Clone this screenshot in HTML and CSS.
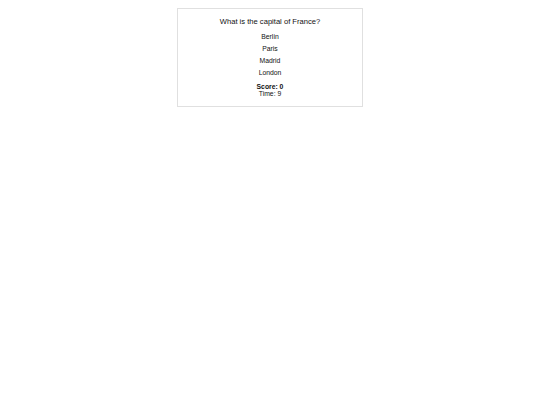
FILE: index.html
```html
<!DOCTYPE html>
<html lang="en">
<head>
  <meta charset="UTF-8" />
  <meta name="viewport" content="width=device-width, initial-scale=1.0"/>
  <title>Quiz</title>
  <link rel="stylesheet" href="styles.css">
</head>
<body>
<div class="quiz">
  <h2 class="question">What is the capital of France?</h2>
  <ul class="options">
    <li>Berlin</li>
    <li>Paris</li>
    <li>Madrid</li>
    <li>London</li>
  </ul>
  <p class="score">Score: 0</p>
  <p class="time">Time: 9</p>
</div>
</body>
</html>
```

FILE: styles.css
```css
body { font-family: "Liberation Sans", Arial, sans-serif; margin: 8px; background: #fff; color: #111; }
.quiz { width: 184px; margin: 0 auto; border: 1px solid #e0e0e0; padding: 8px 0 8.5px; text-align: center; }
.question { font-size: 7.6px; font-weight: normal; line-height: 9px; margin: 0 0 5px; }
.options { list-style: none; margin: 0; padding: 0; }
.options li { font-size: 6.8px; line-height: 12px; height: 12px; cursor: pointer; }
.score { font-size: 6.8px; font-weight: bold; line-height: 7.5px; margin: 3.5px 0 0; }
.time { font-size: 6.8px; line-height: 7.5px; margin: 0; }
```
